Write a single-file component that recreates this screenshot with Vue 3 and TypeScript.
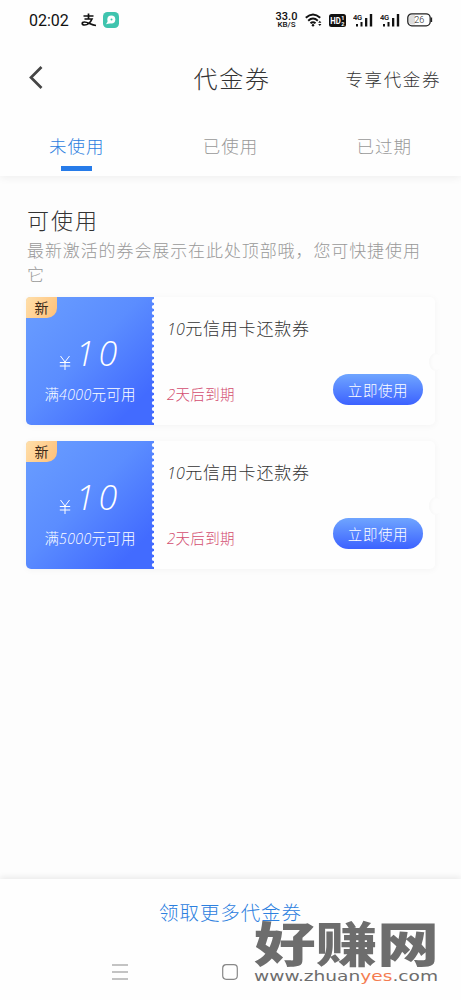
<script setup lang="ts">
interface Coupon { id: number; amount: string; limit: string; title: string; expiry: string }
const tabs: string[] = ['未使用', '已使用', '已过期']
const coupons: Coupon[] = [
  { id: 1, amount: '10', limit: '4000', title: '元信用卡还款券', expiry: '天后到期' },
  { id: 2, amount: '10', limit: '5000', title: '元信用卡还款券', expiry: '天后到期' },
]
</script>

<template>
  <div class="page">
    <header class="top">
      <div class="status">
        <span class="clock">02:02</span>
        <svg class="pay" viewBox="0 0 16 14" width="16" height="14" fill="none" stroke="#111" stroke-width="1.7">
          <path d="M2.500 3H12.500M7.500 .5V6M3.500 6H11C9.500 9.500 6.500 12 3.500 12C.5 12 .5 9 3.500 9C7 9 10 12 15 12.500" />
        </svg>
        <svg class="chat" viewBox="0 0 16 16" width="16" height="16">
          <rect width="16" height="16" rx="4.500" fill="#3fc4ae" />
          <circle cx="8.300" cy="7.500" r="4" fill="#fff" />
          <path d="M3 12.300L5 9L7.500 11.200Z" fill="#fff" /><circle cx="8.500" cy="7.500" r="1" fill="#3fc4ae" />
        </svg>
        <span class="speed"><b>33.0</b><i>KB/S</i></span>
        <svg class="wifi" viewBox="0 0 18 14" width="18" height="14" fill="none" stroke="#111" stroke-width="1.900">
          <path d="M.8 4.800Q8 -2 15.200 4.800M3.200 7.700Q8 3.300 12.800 7.700M5.500 10.300Q8 8 10.500 10.300" />
          <circle cx="8" cy="12.300" r="1.200" fill="#111" stroke="none" />
          <path d="M13.200 9.800L14.800 7.800L16.400 9.800ZM13.200 11L14.800 13L16.400 11Z" fill="#111" stroke="none" />
        </svg>
        <svg class="hd" viewBox="0 0 17 13" width="17" height="13">
          <rect width="17" height="13" rx="2.500" fill="#111" />
          <text x="1.300" y="9.800" font-size="9" font-weight="700" fill="#fff" textLength="10.500" lengthAdjust="spacingAndGlyphs">HD</text>
          <text x="12.300" y="6" font-size="5.500" font-weight="700" fill="#fff">1</text>
          <text x="12.300" y="11.500" font-size="5.500" font-weight="700" fill="#fff">2</text>
        </svg>
        <svg v-for="n in 2" :key="n" class="signal" viewBox="0 0 20 14" width="20" height="14" fill="#111">
          <text x="0" y="6.500" font-size="7.500" font-weight="600" textLength="9">4G</text>
          <path d="M3 11H5V13.500H3ZM7.500 9H9.500V13.500H7.500ZM12 5H14.300V13.500H12ZM16.800 1H19.200V13.500H16.800Z" />
        </svg>
        <svg class="battery" viewBox="0 0 26 14" width="26" height="14">
          <rect x=".8" y=".8" width="22.400" height="12" rx="4" fill="#fff" stroke="#222" stroke-width="1.300" />
          <path d="M5 2H8V11.600H5Q2 11.600 2 9V5Q2 2 5 2Z" fill="#ddd" />
          <path d="M24.500 4.500V9" stroke="#222" stroke-width="1.300" />
          <text x="7.300" y="10.200" font-size="9" fill="#222">26</text>
        </svg>
      </div>
      <div class="nav">
        <svg class="back" viewBox="0 0 14 23" width="14" height="23" fill="none" stroke="#454545" stroke-width="2.700">
          <path d="M12.500 1L2 11.500L12.500 22" />
        </svg>
        <h1>代金券</h1>
        <a class="exclusive">专享代金券</a>
      </div>
      <nav class="tabs">
        <span v-for="(tab, i) in tabs" :key="tab" class="tab" :class="{ active: i === 0 }">{{ tab }}</span>
      </nav>
    </header>

    <main>
      <h2>可使用</h2>
      <p class="hint">最新激活的券会展示在此处顶部哦，您可快捷使用它</p>
      <article v-for="c in coupons" :key="c.id" class="coupon">
        <div class="value">
          <span class="new">新</span>
          <div class="amount"><svg class="yen" viewBox="0 0 12 16" width="12" height="16" fill="none" stroke="#fff" stroke-width="1"><path d="M1.500 1L6 7L10.500 1M6 7V15M.8 7.500H11.200M.8 11H11.200" /></svg><em>{{ c.amount }}</em></div>
          <div class="limit">满<em>{{ c.limit }}</em>元可用</div>
          <svg class="perforation" width="3" height="128" viewBox="0 0 3 128">
            <ellipse v-for="n in 21" :key="n" cx="3" :cy="n * 6 - 2" rx="2.200" ry="2.100" fill="#fefefe" />
          </svg>
        </div>
        <div class="info">
          <h3><em>10</em>{{ c.title }}</h3>
          <div class="row">
            <span class="expiry"><em>2</em>{{ c.expiry }}</span>
            <button type="button">立即使用</button>
          </div>
        </div>
        <span class="notch"></span>
      </article>
    </main>

    <footer>
      <a class="more">领取更多代金券</a>
      <div class="system">
        <svg width="16" height="16" viewBox="0 0 16 16" stroke="#888" stroke-width="1.200"><path d="M0 1H16M0 8H16M0 15H16" /></svg>
        <svg width="16" height="16" viewBox="0 0 16 16" fill="none" stroke="#888" stroke-width="1.200"><rect x=".7" y=".7" width="14.600" height="14.600" rx="3.500" /></svg>
      </div>
      <svg class="brand" width="192" height="72" viewBox="0 0 192 72">
        <text class="brand-name" x="0" y="48" textLength="185" lengthAdjust="spacingAndGlyphs">好赚网</text>
        <text class="brand-url" x="0" y="67" textLength="184" lengthAdjust="spacingAndGlyphs">www.zhuan<tspan fill="#f47c51">yes</tspan>.com</text>
      </svg>
    </footer>
  </div>
</template>

<style>
body { background: #fdfdfd; }
</style>

<style scoped>
* { box-sizing: border-box; }
.page { width: 461px; height: 1000px; display: flex; flex-direction: column; overflow: hidden; background: #fdfdfd; color: #333; font-family: "Liberation Sans", "Noto Sans CJK SC", sans-serif; font-weight: 300; }
h1, h2, h3, p { margin: 0; font-weight: 300; }
.top { height: 176px; background: #fefefe; box-shadow: 0 2px 8px rgba(0,0,0,.06); }
.status { height: 40px; display: flex; align-items: center; padding-left: 29px; font-family: Roboto, sans-serif; }
.clock { width: 41px; font-size: 16px; font-weight: 400; color: #111; }
.pay { margin-left: 11px; }
.chat { margin-left: 6px; }
.speed { width: 23px; margin-left: 156px; display: flex; flex-direction: column; align-items: center; color: #111; }
.speed b { font-size: 11px; line-height: 9px; font-weight: 500; }
.speed i { font-size: 8px; line-height: 8px; font-style: normal; font-weight: 500; }
.wifi { margin-left: 7px; }
.hd { margin-left: 6px; }
.signal { margin-left: 7px; }
.battery { margin-left: 7px; }
.nav { height: 80px; display: grid; grid-template-columns: 1fr 80px 1fr; align-items: center; padding: 0 21px 0 29px; }
.back { margin-top: -6px; }
h1 { font-size: 24px; letter-spacing: 1.700px; line-height: 36px; white-space: nowrap; margin-left: -1px; }
.exclusive { justify-self: end; font-size: 17.500px; letter-spacing: 1.600px; margin: -4px -1px 0 0; }
.tabs { display: grid; grid-template-columns: repeat(3, 1fr); height: 56px; }
.tab { display: flex; flex-direction: column; align-items: center; padding-top: 14px; font-size: 17.500px; letter-spacing: 1px; line-height: 27px; color: #999; }
.active { color: #2c80df; }
.active::after { content: ""; width: 31px; height: 5px; margin-top: 5px; background: #267be9; }
main { flex: 1; padding: 28px 26px 0; }
h2 { font-size: 22px; letter-spacing: 2px; line-height: 36px; padding-left: 1px; }
.hint { font-size: 17px; letter-spacing: .9px; line-height: 24px; color: #999; padding-left: 1px; margin-right: 10px; }
.coupon { width: 409px; height: 128px; margin-top: 9px; display: flex; position: relative; background: #fefefe; border-radius: 5px; box-shadow: 0 1px 7px rgba(0,0,0,.045); }
.coupon + .coupon { margin-top: 16px; }
.value { width: 128px; position: relative; padding-top: 35px; color: #fff; text-align: center; border-radius: 5px 0 0 5px; background: linear-gradient(135deg, #6a9eff 0%, #5b8dff 45%, #426bff 85%); }
.new { position: absolute; left: 0; top: 0; width: 31px; height: 21px; font: 400 14px/20px "Noto Sans CJK SC", sans-serif; color: #3b2919; border-radius: 4px 0 10px 0; background: linear-gradient(120deg, #ffdfaa, #ffc078); }
.amount { height: 42px; display: flex; justify-content: center; align-items: center; gap: 5px; }
.yen { margin-top: 19px; }
.amount em { font: italic 300 34px/42px "Open Sans", sans-serif; letter-spacing: 4px; }
.limit { margin-top: 9px; font-size: 14.500px; line-height: 24px; letter-spacing: .2px; }
.limit em { font: italic 300 14px "Open Sans", sans-serif; letter-spacing: .4px; }
.perforation { position: absolute; right: 0; top: 0; }
.info { flex: 1; padding: 19px 12px 0 13px; }
h3 { font-size: 17px; letter-spacing: .8px; line-height: 28px; }
h3 em { font: italic 300 16px "Open Sans", sans-serif; letter-spacing: .3px; }
.row { display: flex; justify-content: space-between; padding-top: 30px; }
.expiry { padding-top: 9px; font-size: 14.500px; line-height: 24px; letter-spacing: .3px; color: #d34d70; }
.expiry em { font: italic 300 15px "Open Sans", sans-serif; }
button { width: 90px; height: 31px; padding: 0; border: 0; border-radius: 16px; color: #fff; font: 300 14.500px/31px "Noto Sans CJK SC", sans-serif; letter-spacing: .6px; background: linear-gradient(#6fa5ff, #3c62ff); }
.notch { position: absolute; right: -7px; top: 56px; width: 13px; height: 18px; border-radius: 50%; background: #fdfdfd; box-shadow: inset 2px 0 3px rgba(0,0,0,.025); }
footer { height: 121px; position: relative; background: #fefefe; box-shadow: 0 -2px 6px rgba(0,0,0,.08); display: flex; flex-direction: column; align-items: center; }
.more { margin-top: 18px; font-size: 19.500px; letter-spacing: .9px; line-height: 32px; color: #2c80df; }
.system { align-self: stretch; display: flex; gap: 94px; padding: 35px 0 0 112px; }
.brand { position: absolute; left: 254px; top: 35px; }
.brand-name { font: 900 48px "Noto Sans CJK SC", sans-serif; fill: #6d6d6d; }
.brand-url { font: 400 14px "DejaVu Sans", sans-serif; fill: #6d6d6d; stroke: none; }
</style>
